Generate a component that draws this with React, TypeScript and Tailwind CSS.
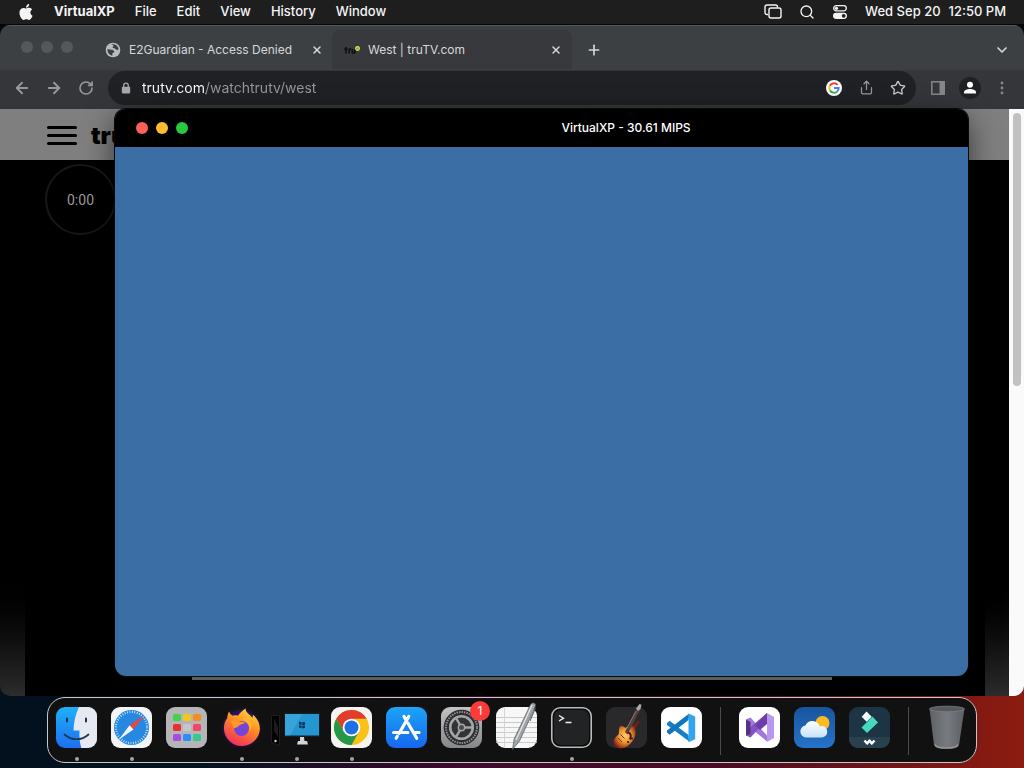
import { useState } from "react";
import type { ReactNode } from "react";
import {
  ArrowLeft,
  ArrowRight,
  ChevronDown,
  Plus,
  RotateCw,
  Search,
  Share,
  Star,
  X,
} from "lucide-react";

const menus = ["File", "Edit", "View", "History", "Window"];

function AppleIcon() {
  return (
    <svg viewBox="0 0 24 24" className="w-4 h-4" fill="currentColor">
      <path d="M12.15 6.9c-.95 0-2.42-1.08-3.96-1.04-2.04.03-3.91 1.18-4.96 3.01-2.12 3.68-.55 9.1 1.52 12.09 1.01 1.45 2.21 3.09 3.79 3.04 1.52-.07 2.09-.99 3.94-.99 1.83 0 2.35.99 3.96.95 1.64-.03 2.68-1.48 3.68-2.95 1.16-1.69 1.64-3.33 1.66-3.41-.04-.01-3.18-1.22-3.22-4.86-.03-3.04 2.48-4.5 2.6-4.56-1.43-2.09-3.62-2.32-4.39-2.38-2-.16-3.68 1.09-4.61 1.09zM15.53 3.83c.84-1.01 1.4-2.43 1.25-3.83-1.21.05-2.66.81-3.53 1.82-.78.9-1.45 2.34-1.27 3.71 1.34.1 2.72-.69 3.56-1.7" />
    </svg>
  );
}

function ScreensIcon() {
  return (
    <svg viewBox="0 0 18 16" className="w-[18px] h-4" fill="none" stroke="currentColor" strokeWidth="1.4">
      <path d="M4 10.500H3A2 2 0 0 1 1 8.500V3a2 2 0 0 1 2-2h8.500a2 2 0 0 1 2 2v.5" />
      <rect x="5" y="4" width="12" height="10" rx="2" />
    </svg>
  );
}

function ControlCenterIcon() {
  return (
    <svg viewBox="0 0 16 16" className="w-4 h-4">
      <rect x="1.700" y="1.700" width="12.600" height="5.200" rx="2.600" fill="none" stroke="currentColor" strokeWidth="1.300" />
      <circle cx="4.500" cy="4.300" r="1.600" fill="currentColor" />
      <rect x="1" y="8.700" width="14" height="6.300" rx="3.150" fill="currentColor" />
      <circle cx="11.700" cy="11.850" r="1.900" fill="#1e1e1e" />
    </svg>
  );
}

function GlobeIcon() {
  return (
    <svg viewBox="0 0 24 24" className="w-4 h-4 shrink-0">
      <circle cx="12" cy="12" r="11" fill="#b9bcbf" />
      <path d="M3.800 10.500c2.500.3 4.500 1.200 7.200 1 1.600.3 1.500 2 3.200 2.600-.2 1.800-2.700 1.400-3.200 3.200-.2 1.400.8 2.300-.4 3.200A8.600 8.600 0 0 1 3.800 10.500zM9.500 4c3-1 6.500-.3 8.600 2 1.200 1.300 2.200 3.200 2.300 5-1.400 1.500-3.600 1-4.600-.6-1-1.200-3.600-.4-4.300-2-.3-1.600 1.500-1.700 1.300-3-.8-.9-2.300-.7-3.300-1.400z" fill="#3c4043" />
    </svg>
  );
}

function TruFavicon() {
  return (
    <svg viewBox="0 0 16 16" className="w-4 h-4 shrink-0">
      <path d="M2 5v6.500M.3 7.200h3.200M5.200 11.500V7.500q.5-.7 1.800-.4M8.300 7v3.200q1.400 1.800 2.700 0V7" fill="none" stroke="#111" strokeWidth="1.800" />
      <circle cx="13.500" cy="6.500" r="1.900" fill="#8f9a50" stroke="#d7ea4c" strokeWidth="1.100" />
    </svg>
  );
}

function LockIcon() {
  return (
    <svg viewBox="0 0 12 14" className="w-[10px] h-3 shrink-0">
      <path d="M3.300 6V3.800a2.700 2.700 0 0 1 5.400 0V6" fill="none" stroke="#a5a9ad" strokeWidth="1.600" />
      <rect x="1" y="5.500" width="10" height="8" rx="1" fill="#a5a9ad" />
    </svg>
  );
}

function GoogleIcon() {
  return (
    <svg viewBox="0 0 16 16" className="w-4 h-4">
      <circle cx="8" cy="8" r="8" fill="#fff" />
      <g fill="none" strokeWidth="1.900">
        <path d="M11.600 4.800A4.700 4.700 0 0 0 3.900 5.800" stroke="#ea4335" />
        <path d="M3.900 5.800a4.700 4.700 0 0 0 0 4.500" stroke="#fbbc05" />
        <path d="M3.900 10.300a4.700 4.700 0 0 0 7.200 1.300" stroke="#34a853" />
        <path d="M11.100 11.600A4.500 4.500 0 0 0 12.700 8H8" stroke="#4285f4" />
      </g>
    </svg>
  );
}

function SidePanelIcon() {
  return (
    <svg viewBox="0 0 16 16" className="w-4 h-4">
      <rect x="1.800" y="1.800" width="12.400" height="12.400" fill="none" stroke="#85888b" strokeWidth="1.500" />
      <rect x="9.500" y="1.500" width="5" height="13" fill="#85888b" />
    </svg>
  );
}

function ProfileIcon() {
  return (
    <svg viewBox="0 0 22 22" className="w-[22px] h-[22px]">
      <circle cx="11" cy="11" r="11" fill="#202124" />
      <circle cx="11" cy="7.700" r="3" fill="#fff" />
      <path d="M5 16.500v-1.200c0-2.300 3.500-3.300 6-3.300s6 1 6 3.300v1.200z" fill="#fff" />
    </svg>
  );
}

function DotsIcon() {
  return (
    <svg viewBox="0 0 4 14" className="w-1 h-[14px]" fill="#85888b">
      <circle cx="2" cy="2" r="1.400" />
      <circle cx="2" cy="7" r="1.400" />
      <circle cx="2" cy="12" r="1.400" />
    </svg>
  );
}

/* Dock icons, all drawn on a 41 x 41 box */

function DockSvg({ children }: { children: ReactNode }) {
  return (
    <svg viewBox="0 0 41 41" className="w-[41px] h-[41px] overflow-visible">
      {children}
    </svg>
  );
}

function Finder() {
  return (
    <DockSvg>
      <defs>
        <linearGradient id="finderBlue" x2="0" y2="1">
          <stop offset="0" stopColor="#1fb0f8" />
          <stop offset="1" stopColor="#1c6ff0" />
        </linearGradient>
        <clipPath id="finderClip">
          <rect width="41" height="41" rx="9" />
        </clipPath>
      </defs>
      <g clipPath="url(#finderClip)">
        <rect width="41" height="41" fill="url(#finderBlue)" />
        <path d="M23 0c-3.500 7-5.300 15-5.500 23.500h6c-.4 6 .2 12 1.800 17.500H41V0z" fill="#e6eaf0" />
        <path d="M11 11.500v3M30 11.500v3" stroke="#1b3553" strokeWidth="2" strokeLinecap="round" />
        <path d="M8.500 27.500c7 6.300 17 6.300 24 0" fill="none" stroke="#1b3553" strokeWidth="1.700" strokeLinecap="round" />
      </g>
    </DockSvg>
  );
}

function Safari() {
  return (
    <DockSvg>
      <rect width="41" height="41" rx="9" fill="#f3f4f6" />
      <circle cx="20.500" cy="20.500" r="17.500" fill="#2688e0" />
      <circle cx="20.500" cy="20.500" r="15.600" fill="none" stroke="#dcecfb" strokeWidth="2.200" strokeDasharray="0.8 1.650" />
      <path d="M33.500 8 18.600 18.300l3.800 4.200z" fill="#f0443c" />
      <path d="m7.500 33 11.100-14.700 3.800 4.200z" fill="#f4f6f8" />
    </DockSvg>
  );
}

const padColors = [
  "#46d04e", "#f5c51c", "#f58c1e",
  "#e8302f", "#c3c6cc", "#f5456a",
  "#a94be0", "#2b8ff5", "#38c98c",
];

function Launchpad() {
  return (
    <DockSvg>
      <rect width="41" height="41" rx="9" fill="#b5b5b8" />
      {padColors.map((color, i) => (
        <rect key={color} x={7 + (i % 3) * 10} y={7 + Math.floor(i / 3) * 10} width="8" height="7" rx="1.600" fill={color} />
      ))}
    </DockSvg>
  );
}

function Firefox() {
  return (
    <DockSvg>
      <defs>
        <radialGradient id="ffGlow">
          <stop offset="0.750" stopColor="#2a1260" />
          <stop offset="1" stopColor="#111111" stopOpacity="0" />
        </radialGradient>
        <linearGradient id="ffBody" x1="0.800" y1="0" x2="0.300" y2="1">
          <stop offset="0" stopColor="#ffdf3a" />
          <stop offset="0.450" stopColor="#ff8b22" />
          <stop offset="1" stopColor="#f22a62" />
        </linearGradient>
      </defs>
      <circle cx="20.500" cy="21" r="22" fill="url(#ffGlow)" />
      <path d="M8.200 4.500c.6 2 1.800 3.500 3.600 4.200 1.700-.5 3.700-.5 5.200 0 2-3 4.600-5.400 7.600-7.200 0 3.200 2 4.800 4.500 6.700 1.100 1 1.900 2 2.300 2.900l.6-3.300c4.200 3.700 6.900 8 6.900 14A18 18 0 0 1 3 22.800c-.3-4.500.7-8.300 3.200-11.500.2-2.500.6-4.800 2-6.800z" fill="url(#ffBody)" />
      <circle cx="20.500" cy="21.500" r="7.500" fill="#7444d8" />
      <path d="M10 14.500c4-2 7-1.500 9 .3 2-.3 4 .3 5 1.200-1.600 1-4.800 1.200-6 2.600-.8 1.500-3.100 2.300-4.800 2.600-1.600-2-2.500-4.500-3.200-6.700z" fill="#ff9a28" />
      <path d="M24 14c4 2 5.500 6 4 10 2.500-2 3.300-5 2.500-8.500-1.300-3.300-4.500-5.500-7-5.500-2 0-2 2.500.5 4z" fill="#ffb72e" />
    </DockSvg>
  );
}

function Computer() {
  return (
    <DockSvg>
      <path d="M-4.500 8.500h8v30l-8-3z" fill="#020202" stroke="#2a2a2c" strokeWidth="0.700" />
      <path d="m-2 11 4 9v10l-4-6z" fill="#1c1c1e" />
      <circle cx="-0.500" cy="34" r="1.200" fill="#d5d5d5" />
      <rect x="8" y="5.500" width="36" height="24.500" fill="#151c22" />
      <rect x="9" y="7" width="34" height="21.500" fill="#2497d3" />
      <path d="M9 7h17L14 28.500H9z" fill="#4bb2e3" opacity=".5" />
      <path d="m23 14.500 2.600.7v2.900l-2.600-.7zm3.200.8 2.700-.4v3l-2.700.3zm-3.200 2.900 2.600.6v2.400l-2.600-.7zm3.200.6 2.700-.4v2.700l-2.700.3z" fill="#0b3658" />
      <path d="M24 30h4l.5 4H31l1 3.500H21l1-3.500h2z" fill="#d3d4d8" />
    </DockSvg>
  );
}

function Chrome() {
  return (
    <DockSvg>
      <rect width="41" height="41" rx="9" fill="#f5f4f0" />
      <circle cx="20.500" cy="20.500" r="17.500" fill="#fbc116" />
      <path d="M5.300 11.800A17.500 17.500 0 0 1 35.700 11.800H20.500l-7.500 13z" fill="#e33b2e" />
      <path d="M5.300 11.800A17.500 17.500 0 0 0 20.500 38l7.500-13.200-15 0z" fill="#24994a" />
      <circle cx="20.500" cy="20.500" r="8.800" fill="#fff" />
      <circle cx="20.500" cy="20.500" r="7" fill="#1f6fe5" />
    </DockSvg>
  );
}

function AppStore() {
  return (
    <DockSvg>
      <defs>
        <linearGradient id="storeBg" x2="0" y2="1">
          <stop offset="0" stopColor="#1ba4f8" />
          <stop offset="1" stopColor="#1767ee" />
        </linearGradient>
      </defs>
      <rect width="41" height="41" rx="9" fill="url(#storeBg)" />
      <path d="m22.800 9.500-9.600 16.800M18 9.500l2 3.500M22 16.300l8.700 15M7.500 25.500h14.300M28.500 25.500H33M11.300 29.200l-1.200 2" stroke="#fff" strokeWidth="3.200" strokeLinecap="round" />
    </DockSvg>
  );
}

function Settings() {
  return (
    <DockSvg>
      <defs>
        <linearGradient id="settingsBg" x2="0" y2="1">
          <stop offset="0" stopColor="#c2c3c5" />
          <stop offset="1" stopColor="#85868a" />
        </linearGradient>
      </defs>
      <rect width="41" height="41" rx="9" fill="url(#settingsBg)" />
      <circle cx="20.500" cy="20.500" r="17.800" fill="#2b2c2e" />
      <circle cx="20.500" cy="20.500" r="15.500" fill="none" stroke="#8d8f92" strokeWidth="2" strokeDasharray="1.500 1" />
      <circle cx="20.500" cy="20.500" r="11.300" fill="#323335" stroke="#a3a5a8" strokeWidth="2.600" />
      <path d="M20.500 20.500h11M20.500 20.500l-5.500-9.500M20.500 20.500 15 30" stroke="#a3a5a8" strokeWidth="2.400" />
      <circle cx="20.500" cy="20.500" r="3.200" fill="#4b4c4f" stroke="#a3a5a8" strokeWidth="1.400" />
    </DockSvg>
  );
}

function TextEdit() {
  return (
    <DockSvg>
      <rect width="41" height="41" rx="9" fill="#f7f7f7" />
      <path d="M0 10.500h41M0 15.500h41M0 20.500h41M0 25.500h41M0 30.500h41M0 35.500h41" stroke="#c3c4c6" strokeWidth="0.900" />
      <path d="M8.500 1v39" stroke="#d0d0d2" strokeWidth="0.900" />
      <path d="M34.500-2.500q2.500-3 4.700-.7.700 1.300 0 3L23.500 34l-7 8.500 1.700-10.500z" fill="#9fa4a9" stroke="#505458" strokeWidth="0.700" />
      <path d="M36-2 20 33" stroke="#e3e6e8" strokeWidth="1.300" />
      <path d="m39.500 1-5.500 13" stroke="#55595d" strokeWidth="1" />
    </DockSvg>
  );
}

function Terminal() {
  return (
    <DockSvg>
      <rect x=".8" y=".8" width="39.400" height="39.400" rx="8.500" fill="#0b0b0b" stroke="#b9babb" strokeWidth="1.600" />
      <rect x="3" y="3" width="35" height="35" rx="6.500" fill="#222325" />
      <path d="m8 8.500 4.500 2.700L8 14M14.500 15.500h6" fill="none" stroke="#f1f1f1" strokeWidth="1.400" />
    </DockSvg>
  );
}

function GarageBand() {
  return (
    <DockSvg>
      <defs>
        <radialGradient id="guitar" cx="0.450" cy="0.550">
          <stop offset="0" stopColor="#ffd36a" />
          <stop offset="0.500" stopColor="#ee8f2c" />
          <stop offset="1" stopColor="#7a1f14" />
        </radialGradient>
      </defs>
      <rect width="41" height="41" rx="9" fill="#29292b" />
      <path d="M13.500 20c1.500-1.800 4-1 5.500.7l4-1.200 2.200-3.500 1.500 3.500 4-4.500 2.500-1.500c.7 3-2.700 5-4.200 8.500 1.800 4-.3 10.500-4.500 14.500-5 5.500-12.500 6.500-16 2.500C6 36 8 31 12 28c2-2 .2-5.600 1.500-8z" fill="url(#guitar)" />
      <path d="m19 25 2.500 2.500L34 3l-3-2z" fill="#574039" />
      <path d="M30 1.500 33.500-3l2 .7-1 4.300-2.500 2z" fill="#a9aaad" />
      <path d="m30 4-9 17" stroke="#998b84" strokeWidth="0.800" />
      <path d="M22 25.500c3 .5 3.500 4 2 7" fill="none" stroke="#43150f" strokeWidth="2" />
      <path d="m14.500 27.500 4 4M12 31l4 4" stroke="#5e3928" strokeWidth="1" />
      <circle cx="22" cy="35" r="1" fill="#2a1710" />
      <circle cx="26" cy="31.500" r="1" fill="#2a1710" />
    </DockSvg>
  );
}

function VSCode() {
  return (
    <DockSvg>
      <rect width="41" height="41" rx="9" fill="#fff" />
      <path d="m6 16 2.600-2.300L27.500 28l.8 6.500L6 18z" fill="#1580c8" />
      <path d="m6 25.500 2.600 2.300L27.500 13l.8-6.500L6 23.500z" fill="#1176bd" />
      <path d="m27.500 6.500 6.700 3v22.800l-6.700 3z" fill="#33a5ef" />
    </DockSvg>
  );
}

function VisualStudio() {
  return (
    <DockSvg>
      <rect width="41" height="41" rx="9" fill="#fff" />
      <path d="m7 12.500 4.500-2 16.500 18v6L7 17z" fill="#a177dd" />
      <path d="m7 28.500 4.500 2L28 13V6L7 24z" fill="#8352bf" />
      <path d="M7 12.500 11.500 15v12L7 28.500z" fill="#573282" />
      <path d="m28 6 7 4v21l-7 4z" fill="#b997ec" />
      <path d="M28 6 16 18l5 5 7-6z" fill="#6d3ea6" />
    </DockSvg>
  );
}

function Weather() {
  return (
    <DockSvg>
      <defs>
        <linearGradient id="sky" x2="0" y2="1">
          <stop offset="0" stopColor="#1a549f" />
          <stop offset="1" stopColor="#2474c8" />
        </linearGradient>
        <linearGradient id="cloud" x2="0" y2="1">
          <stop offset="0" stopColor="#fff" />
          <stop offset="1" stopColor="#c7e1f8" />
        </linearGradient>
      </defs>
      <rect width="41" height="41" rx="9" fill="url(#sky)" />
      <circle cx="28.500" cy="16" r="7" fill="#fdbb22" />
      <path d="M12 30.500a6 6 0 0 1-.7-11.900 7.700 7.700 0 0 1 14.400.6 5.800 5.800 0 1 1 1.300 11.300z" fill="url(#cloud)" />
    </DockSvg>
  );
}

function Filmora() {
  return (
    <DockSvg>
      <rect width="41" height="41" rx="9" fill="#1d3444" />
      <path d="M0 30h41v2a9 9 0 0 1-9 9H9a9 9 0 0 1-9-9z" fill="#29404f" />
      <path d="m17.500 4.500 5.200 5.200-5 5-5-5z" fill="#f4fffd" />
      <path d="m23.500 9.500 5.500 6-11 10.500-5.500-5.500z" fill="#42d9bd" />
      <path d="m15.500 33.500 2.700 3 2.300-3 2.300 3 2.700-3" fill="none" stroke="#fff" strokeWidth="2.400" strokeLinejoin="round" />
    </DockSvg>
  );
}

function Trash() {
  return (
    <DockSvg>
      <defs>
        <linearGradient id="bin">
          <stop offset="0" stopColor="#5d6064" />
          <stop offset="0.500" stopColor="#777a7e" />
          <stop offset="1" stopColor="#5c5f63" />
        </linearGradient>
      </defs>
      <path d="M2.500 1.500 7 38q1 4 12.500 4T32 38L37.500 1.500z" fill="url(#bin)" />
      <ellipse cx="20" cy="2" rx="17.500" ry="2.800" fill="#565a5e" stroke="#7c7f83" strokeWidth="0.800" />
      <path d="M8 37.500q1 3.500 11.500 3.500t11.500-3.500" fill="none" stroke="#95989b" strokeWidth="1.200" />
    </DockSvg>
  );
}

type DockItem = {
  name: string;
  icon: ReactNode;
  running?: boolean;
  badge?: number;
};

const dockGroups: DockItem[][] = [
  [
    { name: "Finder", icon: <Finder />, running: true },
    { name: "Safari", icon: <Safari />, running: true },
    { name: "Launchpad", icon: <Launchpad /> },
    { name: "Firefox", icon: <Firefox />, running: true },
    { name: "VirtualXP", icon: <Computer />, running: true },
    { name: "Chrome", icon: <Chrome />, running: true },
    { name: "App Store", icon: <AppStore /> },
    { name: "System Settings", icon: <Settings />, badge: 1 },
    { name: "TextEdit", icon: <TextEdit /> },
    { name: "Terminal", icon: <Terminal />, running: true },
    { name: "GarageBand", icon: <GarageBand /> },
    { name: "Visual Studio Code", icon: <VSCode /> },
  ],
  [
    { name: "Visual Studio", icon: <VisualStudio /> },
    { name: "Weather", icon: <Weather /> },
    { name: "Filmora", icon: <Filmora /> },
  ],
  [{ name: "Trash", icon: <Trash /> }],
];

function MenuBar() {
  return (
    <header className="flex items-center justify-between h-6 pl-[18px] pr-[18px] bg-[#1e1e1e] text-[13px] font-medium text-gray-100">
      <nav className="flex items-center gap-5">
        <button aria-label="Apple menu">
          <AppleIcon />
        </button>
        <button className="font-bold">VirtualXP</button>
        {menus.map((menu) => (
          <button key={menu}>{menu}</button>
        ))}
      </nav>
      <div className="flex items-center gap-[17px]">
        <button aria-label="Screen mirroring">
          <ScreensIcon />
        </button>
        <button aria-label="Search">
          <Search className="w-4 h-4" />
        </button>
        <button aria-label="Control center">
          <ControlCenterIcon />
        </button>
        <button className="flex gap-2">
          <span>Wed Sep 20</span>
          <span>12:50 PM</span>
        </button>
      </div>
    </header>
  );
}

function TabStrip() {
  return (
    <div className="flex items-center h-[45px] pt-1 pb-px pr-3.5 bg-[#3c4043] border-t border-[#54575a] text-[12px] text-[#d5d7da]">
      <div className="flex gap-2 pl-[21px] pb-1.5 w-[93px]">
        <span className="w-3 h-3 rounded-full bg-[#55585b]" />
        <span className="w-3 h-3 rounded-full bg-[#55585b]" />
        <span className="w-3 h-3 rounded-full bg-[#55585b]" />
      </div>
      <div className="flex items-center gap-2 w-[239px] h-full pl-3 pr-[9px]">
        <GlobeIcon />
        <button className="flex-1 text-left whitespace-nowrap">E2Guardian - Access Denied</button>
        <button aria-label="Close E2Guardian tab">
          <X className="w-3 h-3" strokeWidth={3} />
        </button>
      </div>
      <div className="flex items-center gap-2 w-[240px] h-full pl-3 pr-[10px] rounded-t-lg bg-[#37393d]">
        <TruFavicon />
        <button className="flex-1 text-left whitespace-nowrap">West | truTV.com</button>
        <button aria-label="Close truTV tab">
          <X className="w-3 h-3" strokeWidth={3} />
        </button>
      </div>
      <button aria-label="New tab" className="ml-3.5">
        <Plus className="w-4 h-4" strokeWidth={2.5} />
      </button>
      <button aria-label="Search tabs" className="ml-auto">
        <ChevronDown className="w-4 h-4" strokeWidth={2.5} />
      </button>
    </div>
  );
}

function Toolbar() {
  const [url, setUrl] = useState("trutv.com/watchtrutv/west");

  return (
    <div className="flex items-center gap-1.5 h-[39px] px-1.5 pb-1 bg-[#35363a] text-[#96999c]">
      <div className="flex items-center">
        <button aria-label="Back" className="w-8 flex justify-center">
          <ArrowLeft className="w-[18px] h-[18px]" strokeWidth={2.5} />
        </button>
        <button aria-label="Forward" className="w-8 flex justify-center">
          <ArrowRight className="w-[18px] h-[18px]" strokeWidth={2.5} />
        </button>
        <button aria-label="Reload" className="w-8 flex justify-center">
          <RotateCw className="w-4 h-4" strokeWidth={2.5} />
        </button>
      </div>
      <div className="flex flex-1 items-center h-[34px] pl-[13px] pr-0.5 rounded-full bg-[#202124]">
        <LockIcon />
        <input
          type="text"
          aria-label="Address"
          value={url}
          onChange={(e) => setUrl(e.target.value)}
          className="flex-1 ml-[11px] text-sm outline-none text-transparent bg-clip-text bg-[linear-gradient(to_right,#ffffff_64px,#96999c_64px)]"
        />
        <button aria-label="Search with Google" className="w-8 flex justify-center">
          <GoogleIcon />
        </button>
        <button aria-label="Share" className="w-8 flex justify-center">
          <Share className="w-[15px] h-[15px]" />
        </button>
        <button aria-label="Bookmark" className="w-8 flex justify-center text-[#c5c7c9]">
          <Star className="w-4 h-4" />
        </button>
      </div>
      <div className="flex items-center">
        <button aria-label="Side panel" className="w-8 flex justify-center">
          <SidePanelIcon />
        </button>
        <button aria-label="Profile" className="w-8 flex justify-center">
          <ProfileIcon />
        </button>
        <button aria-label="Browser menu" className="w-8 flex justify-center">
          <DotsIcon />
        </button>
      </div>
    </div>
  );
}

function WebPage() {
  return (
    <div className="flex flex-1 bg-black">
      <div className="flex flex-col flex-1">
        <div className="flex items-center gap-3.5 h-[51px] pt-0.5 pl-[47px] bg-[#7f7f7f]">
          <button aria-label="Open menu" className="flex flex-col gap-[5px] w-[30px]">
            <span className="h-[3px] rounded-xs bg-black" />
            <span className="h-[3px] rounded-xs bg-black" />
            <span className="h-[3px] rounded-xs bg-black" />
          </button>
          <a href="#home" className="text-2xl font-black text-black">
            tru
          </a>
        </div>
        <div className="flex flex-1 justify-between">
          <div className="w-[25px] bg-linear-to-b from-black from-75% to-[#2c2c2c]" />
          <div className="flex flex-1 flex-col justify-between pt-1 pl-5">
            <div className="flex items-center justify-center w-[71px] h-[71px] rounded-full border-2 border-[#171717] font-['Liberation_Sans_Narrow',Roboto,sans-serif] text-sm text-[#9b9b9b]">
              0:00
            </div>
            <div className="h-1 ml-[147px] mr-[153px] mb-4 bg-[#a0a0a0]" />
          </div>
          <div className="w-6 bg-linear-to-b from-black from-75% to-[#2c2c2c]" />
        </div>
      </div>
      <div className="w-[15px] px-1 pt-1 bg-[#fafafa]">
        <div className="w-2 h-[273px] rounded-full bg-[#c1c1c1]" />
      </div>
    </div>
  );
}

function VirtualWindow() {
  return (
    <section className="absolute left-[115px] right-[56px] top-[84px] bottom-5 flex flex-col rounded-[11px] overflow-hidden bg-[#3b6ea5] shadow-[0_0_0_1px_#0a0a0a,0_10px_30px_rgba(0,0,0,0.6)]">
      <div className="flex items-center h-[38px] pl-[21px] bg-black">
        <div className="flex gap-2">
          <button aria-label="Close" className="w-3 h-3 rounded-full bg-[#ff5f57]" />
          <button aria-label="Minimize" className="w-3 h-3 rounded-full bg-[#febc2e]" />
          <button aria-label="Zoom" className="w-3 h-3 rounded-full bg-[#28c840]" />
        </div>
        <h1 className="flex-1 pl-24 text-center text-[12px] font-medium text-white">
          VirtualXP - 30.61 MIPS
        </h1>
      </div>
    </section>
  );
}

function DockButton({ item }: { item: DockItem }) {
  return (
    <button aria-label={item.name} className="relative flex flex-col items-center w-[41px]">
      {item.icon}
      {item.badge && (
        <span className="absolute -top-1.5 -right-2 flex items-center justify-center w-5 h-5 rounded-full bg-[#fb3b37] text-[12px] text-white">
          {item.badge}
        </span>
      )}
      {item.running && <span className="w-1 h-1 mt-[9px] rounded-full bg-[#a5a5a5]" />}
    </button>
  );
}

function Dock() {
  return (
    <footer className="flex items-start gap-3.5 h-[66px] mx-auto mt-px mb-[5px] px-2 pt-[9px] rounded-[18px] border border-[#c8c8c8] bg-[#111111]">
      {dockGroups.map((group, i) => (
        <div key={i} className="flex gap-3.5">
          {i > 0 && <span className="w-px h-12 mx-1 bg-[#4c4c4c]" />}
          {group.map((item) => (
            <DockButton key={item.name} item={item} />
          ))}
        </div>
      ))}
    </footer>
  );
}

export default function App() {
  return (
    <div className="flex flex-col min-h-screen font-[Inter,sans-serif] bg-[linear-gradient(to_bottom,#05070c_30%,transparent_80%),linear-gradient(to_right,#03111f_20%,#3d0a2c_45%,#4a0c24_70%,#8c1c10)]">
      <MenuBar />
      <main className="relative flex flex-1 flex-col mt-px rounded-[10px] overflow-hidden">
        <TabStrip />
        <Toolbar />
        <WebPage />
        <VirtualWindow />
      </main>
      <Dock />
    </div>
  );
}
